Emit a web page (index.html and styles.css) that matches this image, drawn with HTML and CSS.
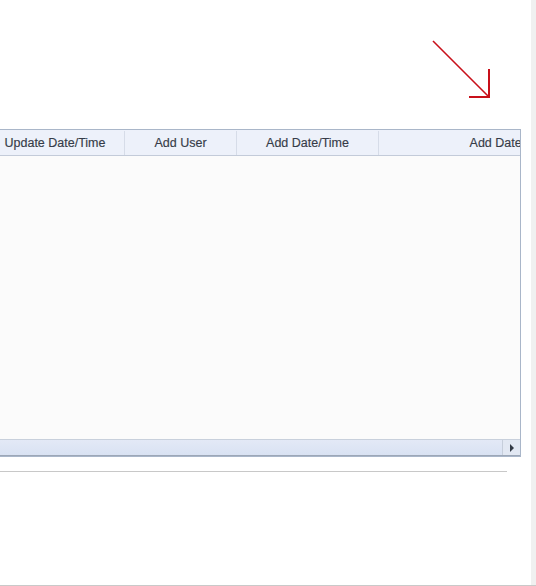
FILE: index.html
```html
<!DOCTYPE html>
<html lang="en">
<head>
<meta charset="utf-8">
<title>Records</title>
<link rel="stylesheet" href="styles.css">
</head>
<body>
<div class="page">
  <main class="main">
    <div class="top">
      <svg class="arrow" width="62" height="62" viewBox="0 0 62 62" aria-hidden="true">
        <line x1="3" y1="3" x2="58.5" y2="58.5" stroke="#c8101a" stroke-width="1.6"/>
        <polyline points="39,59 59,59 59,31" fill="none" stroke="#c8101a" stroke-width="2"/>
      </svg>
    </div>
    <div class="grid">
      <div class="grid-inner">
        <div class="head">
          <div class="col c1">Update Date/Time</div>
          <div class="col c2">Add User</div>
          <div class="col c3">Add Date/Time</div>
          <div class="col c4">Add Date/Time</div>
        </div>
        <div class="body"></div>
      </div>
      <div class="hscroll">
        <div class="track"></div>
        <div class="btn"><span class="tri"></span></div>
      </div>
    </div>
    <div class="rule"></div>
  </main>
  <aside class="edge"></aside>
</div>
</body>
</html>
```
FILE: styles.css
```css
html, body {
  margin: 0;
  padding: 0;
  background: #ffffff;
}

.page {
  display: flex;
  width: 536px;
  height: 586px;
  overflow: hidden;
  box-sizing: border-box;
  border-bottom: 1px solid #c9c9c9;
}

.main {
  width: 531px;
  display: flex;
  flex-direction: column;
}

.edge {
  width: 5px;
  background: #f0f0f0;
}

.top {
  height: 129px;
  display: flex;
  justify-content: flex-end;
  align-items: flex-start;
  box-sizing: border-box;
  padding: 38px 39px 0 0;
}

.arrow {
  display: block;
}

.grid {
  width: 521px;
  box-sizing: border-box;
  border: 1px solid #a9b6c9;
  border-left: none;
  overflow: hidden;
  background: #fbfbfb;
}

.grid-inner {
  margin-left: -14px;
}

.head {
  display: flex;
  height: 26px;
  box-sizing: border-box;
  padding-top: 1px;
  background: #edf1fa;
  border-bottom: 1px solid #c3cbd9;
  font-family: "Liberation Sans", Arial, sans-serif;
  font-size: 12.5px;
  color: #363c48;
  -webkit-text-stroke: 0.15px #363c48;
}

.col {
  flex: none;
  display: flex;
  align-items: center;
  justify-content: center;
  box-sizing: border-box;
  border-right: 1px solid #d6dce8;
  white-space: nowrap;
  overflow: hidden;
}

.c1 { width: 139px; }
.c2 { width: 112px; }
.c3 { width: 142px; }
.c4 { width: 264px; border-right: none; }

.body {
  height: 283px;
  background: #fbfbfb;
}

.hscroll {
  display: flex;
  height: 17px;
  box-sizing: border-box;
  border-top: 1px solid #c8d0dc;
  border-bottom: 1px solid #9ca7b7;
  background: linear-gradient(#e3e9f6, #d9e2f3);
}

.track {
  flex: 1;
}

.btn {
  width: 17px;
  display: flex;
  align-items: center;
  justify-content: center;
  border-left: 1px solid #c6cedb;
  background: #e2e8f3;
}

.tri {
  width: 0;
  height: 0;
  border-top: 4px solid transparent;
  border-bottom: 4px solid transparent;
  border-left: 4px solid #333a46;
  margin-left: 1px;
}

.rule {
  width: 507px;
  height: 1px;
  margin-top: 14px;
  background: #c8c8c8;
}
```
